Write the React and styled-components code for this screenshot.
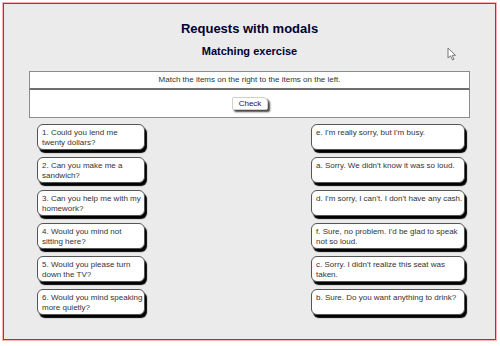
import React from 'react';
import styled, { createGlobalStyle } from 'styled-components';

const GlobalStyle = createGlobalStyle`
  html, body {
    margin: 0;
    padding: 0;
    background: #ffffff;
  }
  * { box-sizing: border-box; }
`;

const Page = styled.div`
  width: 500px;
  height: 346px;
  padding: 3px 4px 6px 3px;
  font-family: 'Liberation Sans', Arial, sans-serif;
`;

const Frame = styled.div`
  position: relative;
  height: 100%;
  border: 1px solid #ff1010;
  box-shadow: 0 0 0 1px #ffb0b0;
  background: #ebebeb;
  padding-top: 17px;
`;

const Title = styled.h1`
  margin: 0;
  text-align: center;
  font-size: 13px;
  line-height: 16px;
  font-weight: bold;
  color: #000033;
`;

const SubTitle = styled.h2`
  margin: 7px 0 0;
  text-align: center;
  font-size: 11px;
  line-height: 15px;
  font-weight: bold;
  color: #000033;
`;

const Panel = styled.div`
  margin: 12px 25px 0 25px;
`;

const Instructions = styled.div`
  height: 19px;
  background: #fff;
  border: 1px solid #8c8c8c;
  border-bottom: 2px solid #6f6f6f;
  font-size: 8px;
  line-height: 16px;
  text-align: center;
  color: #333;
`;

const CheckRow = styled.div`
  height: 28px;
  background: #fff;
  border: 1px solid #8c8c8c;
  border-top: none;
  display: flex;
  justify-content: center;
  padding-top: 7px;
`;

const CheckButton = styled.button`
  width: 36px;
  height: 13px;
  padding: 0;
  margin-left: 1px;
  font-family: inherit;
  font-size: 8px;
  line-height: 11px;
  color: #222;
  background: #fff;
  border: 1px solid #cfcfcf;
  border-radius: 2px 5px 2px 2px;
  box-shadow: 2px 2px 2px #444;
  cursor: pointer;
`;

const Columns = styled.div`
  display: flex;
  justify-content: space-between;
  padding: 6px 5px 0 8px;
`;

const Column = styled.div`
  display: flex;
  flex-direction: column;
  gap: 7px;
`;

const Card = styled.div`
  width: ${({ $w }) => $w}px;
  height: 26px;
  background: #fff;
  border: 1px solid #555;
  border-radius: 6px;
  box-shadow: 2px 3px 1px #000;
  padding: 3px 0 0 4px;
  font-size: 8px;
  line-height: 9.5px;
  color: #333;
`;

const Line = styled.div`
  white-space: nowrap;
`;

const Pointer = styled.svg`
  position: absolute;
  left: 443px;
  top: 43px;
`;

const questions = [
  ['1. Could you lend me', 'twenty dollars?'],
  ['2. Can you make me a', 'sandwich?'],
  ['3. Can you help me with my', 'homework?'],
  ['4. Would you mind not', 'sitting here?'],
  ['5. Would you please turn', 'down the TV?'],
  ['6. Would you mind speaking', 'more quietly?']
];

const answers = [
  ["e. I'm really sorry, but I'm busy."],
  ["a. Sorry. We didn't know it was so loud."],
  ["d. I'm sorry, I can't. I don't have any cash."],
  ["f. Sure, no problem. I'd be glad to speak", 'not so loud.'],
  ["c. Sorry. I didn't realize this seat was", 'taken.'],
  ['b. Sure. Do you want anything to drink?']
];

const App = () => {
  return (
    <>
      <GlobalStyle />
      <Page>
        <Frame>
          <Title>Requests with modals</Title>
          <SubTitle>Matching exercise</SubTitle>
          <Panel>
            <Instructions>Match the items on the right to the items on the left.</Instructions>
            <CheckRow>
              <CheckButton>Check</CheckButton>
            </CheckRow>
            <Columns>
              <Column>
                {questions.map((lines, i) => (
                  <Card key={i} $w={108}>
                    {lines.map((l, j) => <Line key={j}>{l}</Line>)}
                  </Card>
                ))}
              </Column>
              <Column>
                {answers.map((lines, i) => (
                  <Card key={i} $w={154}>
                    {lines.map((l, j) => <Line key={j}>{l}</Line>)}
                  </Card>
                ))}
              </Column>
            </Columns>
          </Panel>
          <Pointer width="10" height="14" viewBox="0 0 10 14">
            <path d="M1 1 L1 11 L3.5 8.8 L5.5 13 L7 12.3 L5.2 8.3 L8.5 8.3 Z" fill="#fff" stroke="#777" strokeWidth="1" strokeLinejoin="round" />
          </Pointer>
        </Frame>
      </Page>
    </>
  );
};

export default App;
